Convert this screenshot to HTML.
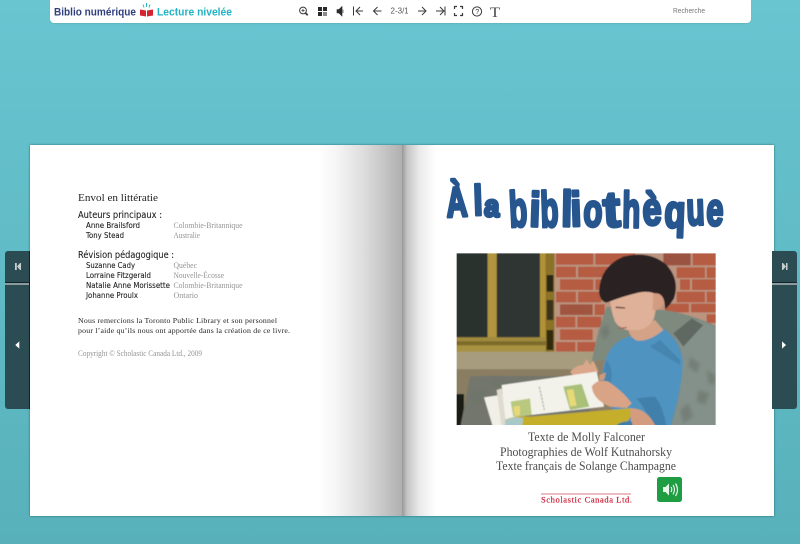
<!DOCTYPE html>
<html lang="fr">
<head>
<meta charset="utf-8">
<title>Biblio numérique</title>
<style>
html,body{margin:0;padding:0;width:800px;height:544px;overflow:hidden}
body{position:relative;background:linear-gradient(#69c6d1 0,#63bfca 150px,#58b1ba 544px);font-family:"Liberation Sans",sans-serif}
.a{position:absolute}
#bar{left:50px;top:-4px;width:701px;height:27px;background:#fff;border-radius:4px;box-shadow:0 1px 1px rgba(0,0,0,.08)}
#book{left:30px;top:145px;width:744px;height:371px;background:#fff;box-shadow:0 0 2px rgba(20,80,90,.8)}
.nav{background:#2a4c52;width:25px}
svg{position:absolute;left:0;top:0}
</style>
</head>
<body>
<div class="a" id="bar"></div>
<div class="a" id="book">
  <div class="a" style="left:288px;top:0;width:84px;height:371px;background:linear-gradient(90deg,rgba(170,170,170,0) 0,rgba(170,170,170,.1) 20%,rgba(165,165,165,.38) 55%,#b0b0b0 100%)"></div>
  <div class="a" style="left:372px;top:0;width:34px;height:371px;background:linear-gradient(90deg,#979797 0,#c4c4c4 15%,#e9e9e9 50%,#fff 100%)"></div>
</div>
<div class="a nav" style="left:5px;top:251px;height:31px;border-radius:3px 0 0 0"></div>
<div class="a" style="left:5px;top:282px;width:25px;height:1px;background:#10262a"></div>
<div class="a" style="left:5px;top:283px;width:25px;height:2px;background:#8b9a9c"></div>
<div class="a nav" style="left:5px;top:285px;height:124px;border-radius:0 0 0 3px"></div>
<div class="a" style="left:29px;top:251px;width:1px;height:158px;background:#0e2226"></div>
<div class="a nav" style="left:772px;top:251px;height:31px;border-radius:0 3px 0 0"></div>
<div class="a" style="left:772px;top:282px;width:25px;height:1px;background:#10262a"></div>
<div class="a" style="left:772px;top:283px;width:25px;height:2px;background:#8b9a9c"></div>
<div class="a nav" style="left:772px;top:285px;height:124px;border-radius:0 0 3px 0"></div>

<svg width="800" height="544" viewBox="0 0 800 544" xmlns="http://www.w3.org/2000/svg">
<defs>
<filter id="soft" x="-2%" y="-2%" width="104%" height="104%"><feGaussianBlur stdDeviation="1.800"/></filter>
<filter id="b1" x="-20%" y="-20%" width="140%" height="140%"><feGaussianBlur stdDeviation="5"/></filter>
<clipPath id="ph"><rect x="20" y="10" width="777" height="515"/></clipPath>
<clipPath id="pg"><rect x="388" y="0" width="20" height="24"/></clipPath>
</defs>

<!-- logo -->
<text x="54" y="15.500" font-size="10.800" font-weight="700" fill="#2f3f7e" textLength="82" lengthAdjust="spacingAndGlyphs">Biblio numérique</text>
<path d="M140 9.500l6 1v6l-6-1zM153 9.500l-6 1v6l6-1z" fill="#d5232f"/>
<path d="M146.500 3v4M143 4.500l1 3M150 4.500l-1 3" stroke="#28b6c6" stroke-width="1" fill="none"/>
<text x="157" y="15.500" font-size="10.800" font-weight="700" fill="#22b3c4" textLength="75" lengthAdjust="spacingAndGlyphs">Lecture nivelée</text>

<!-- toolbar icons -->
<g fill="none" stroke="#3a3a3a" stroke-width="1">
  <circle cx="303" cy="10.500" r="3.400"/><path d="M305.500 13l2.200 2.200" stroke-width="1.800"/><path d="M301.400 10.500h3.200M303 8.900v3.200" stroke-width=".8"/>
  <path d="M353.500 6.500v9M360 7l-4 4 4 4M356 11h7"/>
  <path d="M381.500 11h-8M377.500 7l-4 4 4 4"/>
  <path d="M418 11h8M422 7l4 4-4 4"/>
  <path d="M436 11h7M440 7l4 4-4 4M445 6.500v9"/>
  <path d="M454.500 9V6.500h2.500M460 6.500h2.500V9M462.500 13v2.500H460M457 15.500h-2.500V13" stroke-width="1.200"/>
  <circle cx="477" cy="11.500" r="4.600"/>
</g>
<path d="M318 7h4v4h-4zM323 7h4v4h-4zM318 12h4v4h-4z" fill="#2a2a2a"/><path d="M323 12h4v4h-4z" fill="#8a8a8a"/>
<path d="M337 9.500h2l3-3v9.500l-3-3h-2zM343 9.500v3.500" fill="#2a2a2a" stroke="#2a2a2a" stroke-width=".6"/>
<text x="475.200" y="14" font-size="7" fill="#333">?</text>
<text x="490" y="17" font-size="15" fill="#444" font-family="'Liberation Serif',serif" textLength="10" lengthAdjust="spacingAndGlyphs">T</text>
<g clip-path="url(#pg)"><text x="390.500" y="13.500" font-size="8" fill="#555">2-3/16</text></g>
<text x="673" y="13" font-size="7" fill="#777" textLength="32" lengthAdjust="spacingAndGlyphs">Recherche</text>

<!-- nav icons -->
<g fill="#c5cfd0">
<path d="M15 263h1.800v7H15zM20 263v7l-3-3.500z"/>
<path d="M20 263h1v7h-1z"/>
<path d="M782 263h1v7h-1zM783 263l3 3.500-3 3.500zM786 263h1.500v7H786z"/>
<path d="M18.800 342.500v5l-2.800-2.500z" stroke="#fff" stroke-width="1" fill="#fff"/>
<path d="M782.500 342.500v5l2.800-2.500z" stroke="#fff" stroke-width="1" fill="#fff"/>
</g>

<!-- left page text -->
<g font-family="'Liberation Serif',serif" fill="#222">
<text x="78" y="201" font-size="10.500" textLength="80" lengthAdjust="spacingAndGlyphs">Envol en littératie</text>
<text x="78" y="323" font-size="7.800" textLength="199" lengthAdjust="spacing">Nous remercions la Toronto Public Library et son personnel</text>
<text x="78" y="333" font-size="7.800" textLength="212" lengthAdjust="spacing">pour l’aide qu’ils nous ont apportée dans la création de ce livre.</text>
</g>
<g font-family="'Liberation Serif',serif" fill="#949494" font-size="8">
<text x="173.500" y="228" textLength="69" lengthAdjust="spacingAndGlyphs">Colombie-Britannique</text>
<text x="173.500" y="238" textLength="26.500" lengthAdjust="spacingAndGlyphs">Australie</text>
<text x="173.500" y="268" textLength="23.500" lengthAdjust="spacingAndGlyphs">Québec</text>
<text x="173.500" y="278" textLength="50.500" lengthAdjust="spacingAndGlyphs">Nouvelle-Écosse</text>
<text x="173.500" y="288" textLength="69" lengthAdjust="spacingAndGlyphs">Colombie-Britannique</text>
<text x="173.500" y="298" textLength="24.500" lengthAdjust="spacingAndGlyphs">Ontario</text>
<text x="78" y="356" textLength="124" lengthAdjust="spacingAndGlyphs">Copyright © Scholastic Canada Ltd., 2009</text>
</g>
<g font-family="'DejaVu Sans',sans-serif" fill="#1c1c1c" stroke="#1c1c1c" stroke-width=".1">
<text x="78" y="218" font-size="9.500" textLength="84" lengthAdjust="spacingAndGlyphs">Auteurs principaux :</text>
<text x="78" y="258" font-size="9.500" textLength="96" lengthAdjust="spacingAndGlyphs">Révision pédagogique :</text>
<g font-size="8">
<text x="86" y="228" textLength="54" lengthAdjust="spacingAndGlyphs">Anne Brailsford</text>
<text x="86" y="238" textLength="38" lengthAdjust="spacingAndGlyphs">Tony Stead</text>
<text x="86" y="268" textLength="49" lengthAdjust="spacingAndGlyphs">Suzanne Cady</text>
<text x="86" y="278" textLength="65" lengthAdjust="spacingAndGlyphs">Lorraine Fitzgerald</text>
<text x="86" y="288" textLength="84" lengthAdjust="spacingAndGlyphs">Natalie Anne Morissette</text>
<text x="86" y="298" textLength="52" lengthAdjust="spacingAndGlyphs">Johanne Proulx</text>
</g>
</g>

<!-- title -->
<g font-family="'Liberation Sans',sans-serif" font-weight="700" font-size="46" fill="#27568f" stroke="#27568f" stroke-width="3.200" stroke-linejoin="round">
<text transform="translate(447,217) rotate(-3)" textLength="21" lengthAdjust="spacingAndGlyphs" font-size="42">À</text>
<text transform="translate(474,215) rotate(-2)" textLength="9" lengthAdjust="spacingAndGlyphs" font-size="42">l</text>
<text transform="translate(484,216) rotate(2)" textLength="15" lengthAdjust="spacingAndGlyphs" font-size="30">a</text>
<text transform="translate(510,227) rotate(-3)" textLength="18" lengthAdjust="spacingAndGlyphs" font-size="50">b</text>
<text transform="translate(529,226) rotate(2)" textLength="11" lengthAdjust="spacingAndGlyphs" font-size="48">i</text>
<text transform="translate(541,227) rotate(-2)" textLength="18" lengthAdjust="spacingAndGlyphs" font-size="50">b</text>
<text transform="translate(561,226) rotate(1)" textLength="11" lengthAdjust="spacingAndGlyphs" font-size="50">l</text>
<text transform="translate(571,226) rotate(-2)" textLength="11" lengthAdjust="spacingAndGlyphs" font-size="48">i</text>
<text transform="translate(583,226) rotate(2)" textLength="19" lengthAdjust="spacingAndGlyphs" font-size="46">o</text>
<text transform="translate(604,227) rotate(-3)" textLength="17" lengthAdjust="spacingAndGlyphs" font-size="50">t</text>
<text transform="translate(622,227) rotate(1)" textLength="18" lengthAdjust="spacingAndGlyphs" font-size="50">h</text>
<text transform="translate(643,225) rotate(-2)" textLength="19" lengthAdjust="spacingAndGlyphs" font-size="46">è</text>
<text transform="translate(664,227) rotate(2)" textLength="21" lengthAdjust="spacingAndGlyphs" font-size="46">q</text>
<text transform="translate(687,225) rotate(-2)" textLength="18" lengthAdjust="spacingAndGlyphs" font-size="46">u</text>
<text transform="translate(706,225) rotate(2)" textLength="17" lengthAdjust="spacingAndGlyphs" font-size="46">e</text>
</g>

<!-- photo: coords are 3x with origin 450,250 -->
<g transform="translate(450,250) scale(.33333)" clip-path="url(#ph)">
<g filter="url(#soft)">
<rect x="10" y="0" width="797" height="535" fill="#8d8068"/>
<rect x="313" y="0" width="494" height="310" fill="#bb9480"/>
<g fill="#b55c42">
<rect x="318" y="0" width="112" height="44"/><rect x="436" y="0" width="120" height="44"/><rect x="640" y="0" width="82" height="46" fill="#9a5340"/><rect x="728" y="0" width="79" height="46"/>
<rect x="318" y="50" width="60" height="32"/><rect x="384" y="50" width="110" height="32"/><rect x="680" y="52" width="85" height="32"/><rect x="770" y="52" width="37" height="32"/>
<rect x="330" y="88" width="100" height="32"/><rect x="436" y="88" width="20" height="32"/><rect x="690" y="88" width="30" height="32"/><rect x="726" y="88" width="81" height="32"/>
<rect x="318" y="125" width="60" height="32"/><rect x="384" y="125" width="70" height="32"/><rect x="680" y="125" width="85" height="32"/><rect x="770" y="125" width="37" height="32"/>
<rect x="330" y="163" width="98" height="32" fill="#a05440"/><rect x="434" y="163" width="30" height="32"/><rect x="645" y="161" width="72" height="26"/><rect x="723" y="161" width="84" height="26"/>
<rect x="318" y="200" width="58" height="32"/><rect x="382" y="200" width="72" height="32"/><rect x="770" y="193" width="37" height="26"/>
<rect x="330" y="238" width="98" height="32"/><rect x="318" y="276" width="58" height="29"/><rect x="382" y="276" width="54" height="29"/>
</g>
<rect x="10" y="0" width="303" height="320" fill="#9b8138"/>
<rect x="10" y="0" width="103" height="262" fill="#29322f"/>
<rect x="140" y="0" width="130" height="262" fill="#2d3633"/>
<rect x="113" y="0" width="27" height="262" fill="#b1953f"/>
<rect x="270" y="0" width="17" height="320" fill="#b19238"/>
<rect x="287" y="0" width="26" height="320" fill="#8c7228"/>
<rect x="290" y="75" width="20" height="50" fill="#2a2718"/><rect x="290" y="150" width="20" height="60" fill="#3a321a"/><rect x="290" y="240" width="20" height="60" fill="#30290f"/>
<rect x="10" y="262" width="277" height="12" fill="#a08a3c"/><rect x="10" y="274" width="277" height="12" fill="#7b6a2a"/><rect x="10" y="286" width="277" height="34" fill="#a69240"/>
<rect x="10" y="305" width="420" height="53" fill="#a89c7e"/>
<rect x="10" y="358" width="430" height="177" fill="#8a7d62"/>
<rect x="10" y="432" width="32" height="103" fill="#1c1a16"/>
<path d="M60 380 Q110 376 180 378 L360 378 L420 420 L420 535 H30 Z" fill="#73766c"/>
<path d="M425 335 Q440 250 470 170 L640 180 Q720 190 807 232 V535 H660 L700 330 L640 300 Z" fill="#7f8a7f"/>
<path d="M670 250 L725 205 L807 235 V535 H662 Q705 400 695 300 Z" fill="#84918a"/>
<path d="M670 250 L725 205 L760 225 L700 290 Z" fill="#5f6962"/>
<g filter="url(#b1)" fill="#6a736a" opacity=".6">
<path d="M720 320l30 20-10 30-25-20zM745 420l35 10-15 35-25-10zM690 480l25-20 15 40-30 20zM770 360l25 15v30l-20-5z"/>
<path d="M60 430l40-10 10 25-35 15zM130 390l50 5-10 15-40-5zM450 240l20-20 10 30-20 20z"/>
</g>
<path d="M545 258 L640 235 Q690 270 698 330 Q700 400 660 535 H490 Q500 480 465 440 Q445 380 470 320 Q490 270 545 258Z" fill="#4f93c0"/>
<path d="M470 330 Q500 370 470 430 Q450 390 470 330Z M600 290 Q650 320 690 345 L690 330 Q650 290 630 270Z" fill="#4485b0"/>
<path d="M615 440 Q640 470 650 535 H610 Q590 480 560 445Z" fill="#4280ac"/>
<path d="M535 240 L615 210 L640 240 Q600 275 560 272 Q540 262 535 240Z" fill="#d4a286"/>
<path d="M480 130 Q500 90 600 110 Q630 130 612 205 Q590 245 550 240 Q515 245 495 215 Q478 170 480 130Z" fill="#deb198"/>
<path d="M610 125 Q640 120 645 150 Q635 185 608 180Z" fill="#d39b7f"/>
<path d="M447 125 Q450 50 520 20 Q600 0 650 45 Q690 90 672 145 Q660 165 645 178 Q645 128 615 130 Q590 122 565 128 Q520 138 470 158 Q450 155 447 125Z" fill="#2b2220"/>
<path d="M497 172l28 2" stroke="#5a3a2c" stroke-width="4"/>
<path d="M505 232q15 5 25 0" stroke="#a55f55" stroke-width="4" fill="none"/>
<path d="M360 365 Q380 345 400 345 L410 328 L420 345 L430 332 L445 365 L400 375 L370 378Z" fill="#dba78a"/>
<path d="M102 442 L150 435 L175 535 H130Z" fill="#f1efe6"/>
<path d="M155 405 L440 365 L462 470 L200 500 L180 535 H165Z" fill="#f3f2ea"/>
<path d="M140 420L155 415 L170 535 H155Z" fill="#dedcd0"/>
<path d="M182 455 L240 445 L245 495 L190 500Z" fill="#b8c87e"/>
<path d="M340 410 L395 402 L418 470 L360 480Z" fill="#a9c079"/>
<path d="M190 470l20-3v28l-16 2zM350 420l20-3 10 50-20 3z" fill="#e7d878"/>
<path d="M268 410l15 70" stroke="#b6b6aa" stroke-width="4" stroke-dasharray="8 3"/>
<path d="M165 510 Q195 495 240 500 L548 474 L545 495 Q530 525 500 535 H165Z" fill="#c4ae2c"/>
<path d="M165 512 Q190 498 220 505 L215 535 H165Z" fill="#a9c9c9"/>
<path d="M425 410 Q440 385 475 395 Q520 425 545 460 L530 474 L480 470 Q430 450 425 410Z" fill="#d9a486"/>
<path d="M540 476 Q590 470 620 535 H545Z" fill="#d39c7f"/>
<path d="M448 375l20-8-5 22-15 3z" fill="#cf9a7c"/>
<path d="M490 535 Q510 510 545 515 L550 535Z" fill="#3f7ca5"/>
</g>
</g>

<!-- right page text -->
<g font-family="'Liberation Serif',serif" font-size="12.500" fill="#4c4c4c">
<text x="528" y="441" textLength="117" lengthAdjust="spacingAndGlyphs">Texte de Molly Falconer</text>
<text x="500" y="456" textLength="172" lengthAdjust="spacingAndGlyphs">Photographies de Wolf Kutnahorsky</text>
<text x="496" y="470" textLength="180" lengthAdjust="spacingAndGlyphs">Texte français de Solange Champagne</text>
</g>
<rect x="541" y="493.500" width="90" height="1" fill="#d77a85"/>
<text x="541" y="502.500" font-size="8.500" font-family="'Liberation Serif',serif" fill="#cc1f35" stroke="#cc1f35" stroke-width=".2" textLength="91" lengthAdjust="spacing">Scholastic Canada Ltd.</text>

<!-- green audio button -->
<rect x="657" y="477" width="25" height="25" rx="2.500" fill="#1e9d43"/>
<path d="M663 487h2.500l3.500-3.500v12l-3.500-3.500H663z" fill="#e9f6ea"/>
<path d="M671 487q1.500 2.500 0 5M673 485q3 4.500 0 9.500M675.500 483.500q4 6.500 0 12.500" stroke="#e9f6ea" stroke-width="1.200" fill="none"/>
</svg>
</body>
</html>
